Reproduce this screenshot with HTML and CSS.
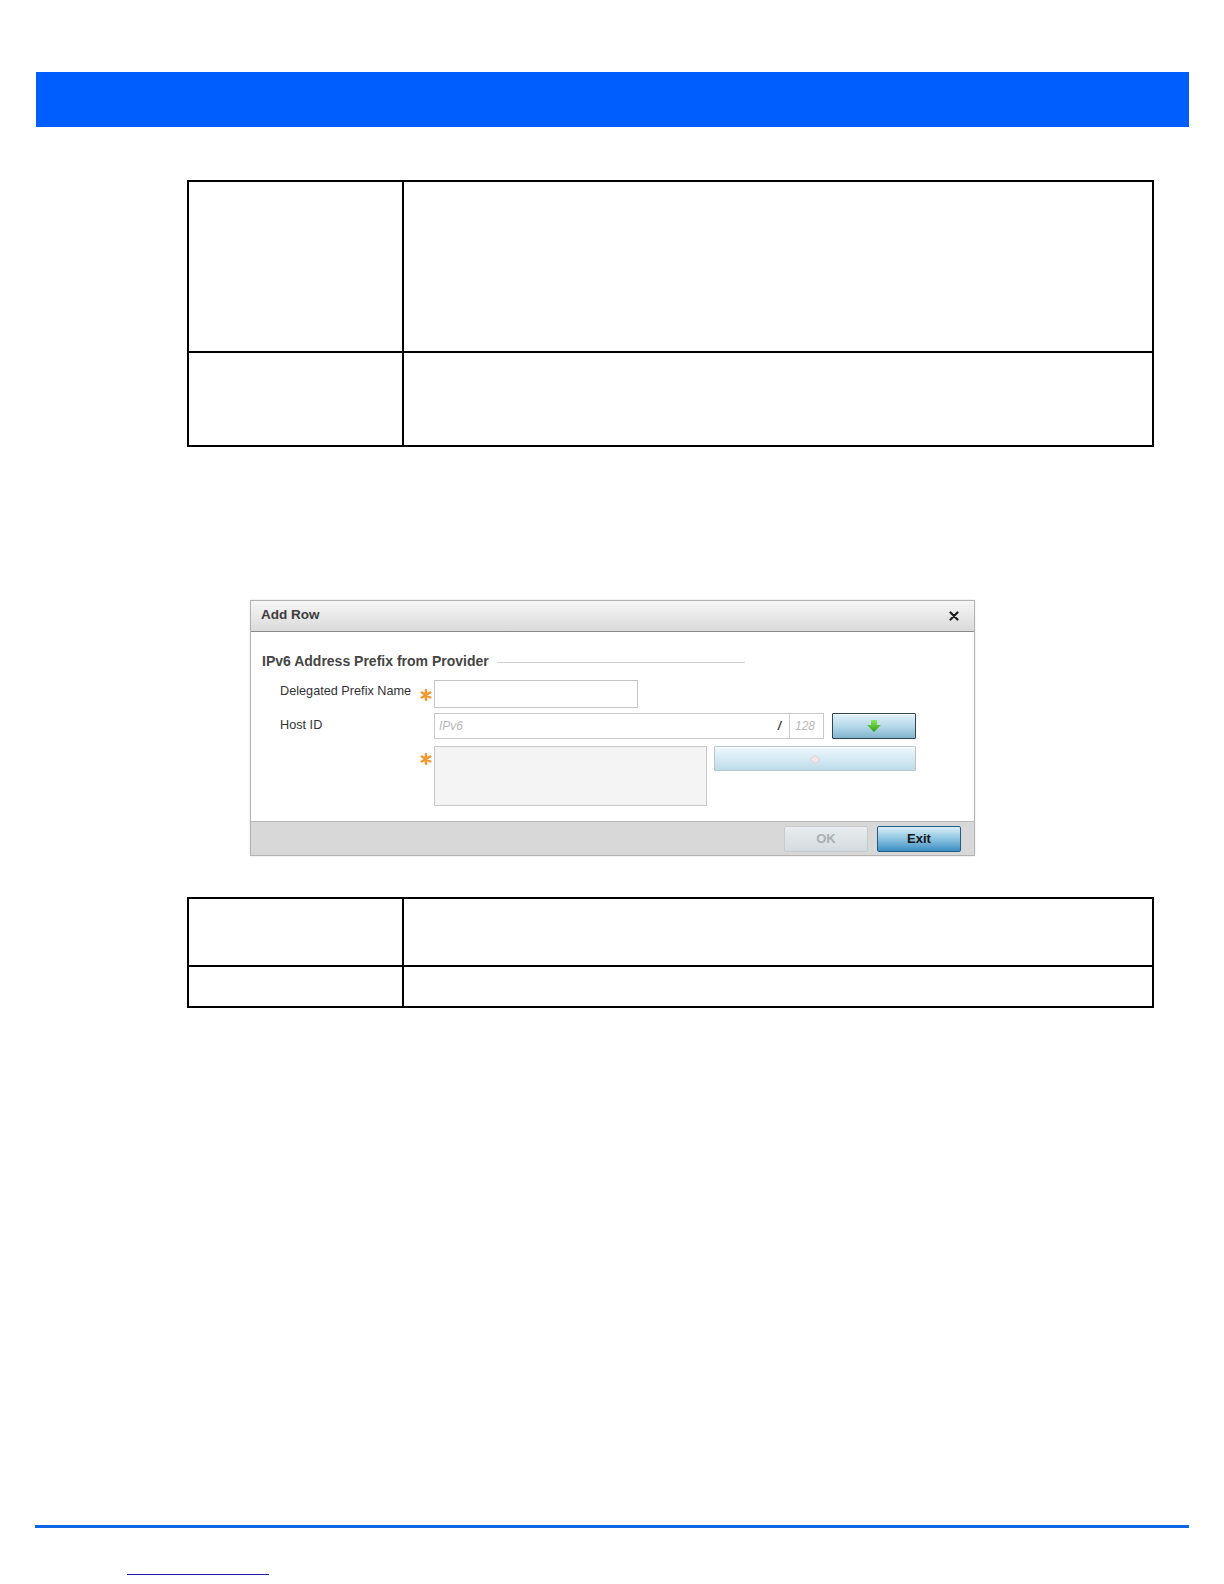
FILE: index.html
```html
<!DOCTYPE html>
<html lang="en">
<head>
    <meta charset="UTF-8">
    <meta name="viewport" content="width=device-width, initial-scale=1.0">
    <title>Add Row</title>
    <link rel="stylesheet" href="styles.css">
</head>
<body>
    <div class="page-bar"></div>

    <div class="spec spec-top">
        <div class="cell cell-tall"></div>
        <div class="cell cell-tall"></div>
        <div class="cell cell-mid"></div>
        <div class="cell cell-mid"></div>
    </div>

    <div class="dialog">
        <div class="dialog-title">
            <span>Add Row</span>
            <svg class="close" width="10" height="10" viewBox="0 0 10 10">
                <path d="M1.5 1.5L8.5 8.5M8.5 1.5L1.5 8.5" stroke="#1e1e1e" stroke-width="2.2" stroke-linecap="round"/>
            </svg>
        </div>

        <div class="dialog-body">
            <div class="group-head">
                <span>IPv6 Address Prefix from Provider</span>
                <span class="group-line"></span>
            </div>

            <div class="form-row row-name">
                <label class="field-label">Delegated Prefix Name</label>
                <span class="req">
                    <svg width="12" height="12" viewBox="0 0 12 12">
                        <path d="M6 1v10M1.7 3.5l8.6 5M1.7 8.5l8.6-5" stroke="#f5952a" stroke-width="2.4" stroke-linecap="round"/>
                    </svg>
                </span>
                <input class="text-input" type="text">
            </div>

            <div class="form-row row-host">
                <label class="field-label">Host ID</label>
                <span class="req"></span>
                <div class="ip-input">
                    <span class="ip-addr">IPv6</span>
                    <span class="ip-slash">/</span>
                    <span class="ip-len">128</span>
                </div>
                <button class="move-btn">
                    <svg width="14" height="12" viewBox="0 0 14 12">
                        <defs>
                            <linearGradient id="grn" x1="0" y1="0" x2="0" y2="1">
                                <stop offset="0" stop-color="#8ee85a"/>
                                <stop offset="1" stop-color="#2a9c16"/>
                            </linearGradient>
                        </defs>
                        <path d="M4 0h6v5h4l-7 7-7-7h4z" fill="url(#grn)"/>
                    </svg>
                </button>
            </div>

            <div class="form-row row-list">
                <span class="field-label"></span>
                <span class="req">
                    <svg width="12" height="12" viewBox="0 0 12 12">
                        <path d="M6 1v10M1.7 3.5l8.6 5M1.7 8.5l8.6-5" stroke="#f5952a" stroke-width="2.4" stroke-linecap="round"/>
                    </svg>
                </span>
                <div class="list-box"></div>
                <button class="move-btn up-btn" disabled>
                    <svg width="14" height="10" viewBox="0 0 14 10">
                        <path d="M7 1l5 4.5-5 4-5-4z" fill="#f3e4e8" stroke="#e6cfd6" stroke-width="1"/>
                    </svg>
                </button>
            </div>
        </div>

        <div class="dialog-foot">
            <button class="btn btn-off" disabled>OK</button>
            <button class="btn btn-exit">Exit</button>
        </div>
    </div>

    <div class="spec spec-bottom">
        <div class="cell cell-short"></div>
        <div class="cell cell-short"></div>
        <div class="cell cell-low"></div>
        <div class="cell cell-low"></div>
    </div>

    <div class="page-rule"></div>
    <a class="page-link" href="#"></a>
</body>
</html>
```

FILE: styles.css
```css
body {
    margin: 0;
    padding: 0;
    background: #ffffff;
    font-family: "Liberation Sans", Arial, sans-serif;
    color: #333;
}
.page-bar {
    margin: 72px 0 0 36px;
    width: 1153px;
    height: 55px;
    background-color: #005eff;
}

/* document tables */
.spec {
    display: grid;
    grid-template-columns: 215px 750px;
    width: 967px;
    margin-left: 187px;
    border-top: 2px solid #000;
    border-left: 2px solid #000;
    box-sizing: border-box;
}
.spec-top {
    margin-top: 53px;
}
.spec-bottom {
    margin-top: 41px;
}
.cell {
    border-right: 2px solid #000;
    border-bottom: 2px solid #000;
}
.cell-tall { height: 169px; }
.cell-mid { height: 92px; }
.cell-short { height: 66px; }
.cell-low { height: 39px; }

/* dialog */
.dialog {
    margin: 153px 0 0 250px;
    width: 725px;
    border: 1px solid #b3b3b3;
    box-sizing: border-box;
    box-shadow: 0 0 2px rgba(0, 0, 0, 0.12);
    background: #fff;
}
.dialog-title {
    height: 31px;
    box-sizing: border-box;
    display: flex;
    align-items: center;
    justify-content: space-between;
    padding: 0 15px 3px 10px;
    background: linear-gradient(#f6f6f6, #dadada);
    border-bottom: 1px solid #8a8a8a;
    font-size: 13.5px;
    font-weight: bold;
    color: #3c3c3c;
}
.close {
    margin-top: 3px;
}
.dialog-body {
    height: 189px;
    box-sizing: border-box;
    padding: 21px 0 0 11px;
}
.group-head {
    display: flex;
    align-items: center;
    height: 16px;
    font-size: 14px;
    font-weight: bold;
    color: #454545;
}
.group-line {
    width: 248px;
    height: 1px;
    margin: 2px 0 0 8px;
    background: #cfcfcf;
}
.form-row {
    display: flex;
    align-items: flex-start;
    padding-left: 18px;
}
.row-name {
    margin-top: 11px;
}
.row-host {
    margin-top: 5px;
}
.row-list {
    margin-top: 7px;
}
.field-label {
    width: 140px;
    flex-shrink: 0;
    font-size: 12.7px;
    color: #333;
    line-height: 16px;
}
.row-name .field-label {
    margin-top: 3px;
}
.row-host .field-label {
    margin-top: 4px;
}
.req {
    width: 14px;
    flex-shrink: 0;
    display: flex;
}
.row-name .req {
    margin-top: 9px;
}
.row-list .req {
    margin-top: 7px;
}
.text-input {
    width: 204px;
    height: 28px;
    box-sizing: border-box;
    border: 1px solid #c4c4c4;
    margin: 0;
    padding: 0 4px;
    background: #fff;
}
.ip-input {
    display: flex;
    width: 390px;
    height: 26px;
    box-sizing: border-box;
    border: 1px solid #c8c8c8;
    font-size: 12px;
    font-style: italic;
    line-height: 24px;
}
.ip-addr {
    flex: 1;
    padding-left: 4px;
    color: #b8b8b8;
}
.ip-slash {
    padding-right: 8px;
    color: #444;
    font-weight: bold;
}
.ip-len {
    width: 34px;
    border-left: 1px solid #d0d0d0;
    padding-left: 5px;
    box-sizing: border-box;
    color: #b8b8b8;
}
.move-btn {
    width: 84px;
    height: 26px;
    margin: 0 0 0 8px;
    padding: 0;
    display: flex;
    align-items: center;
    justify-content: center;
    border: 1px solid #2e4653;
    border-radius: 1px;
    background: linear-gradient(#e2f1f9, #b3d6e8 55%, #80b4cf);
    box-shadow: inset 0 1px 0 rgba(255, 255, 255, 0.7);
}
.list-box {
    width: 273px;
    height: 60px;
    box-sizing: border-box;
    border: 1px solid #c8c8c8;
    background: #f4f4f4;
}
.up-btn {
    width: 202px;
    height: 25px;
    margin-left: 7px;
    border-color: #b9c6cd;
    background: linear-gradient(#eef7fb, #d4e9f3 55%, #bcdbe9);
}
.dialog-foot {
    height: 34px;
    box-sizing: border-box;
    display: flex;
    align-items: center;
    justify-content: flex-end;
    gap: 9px;
    padding: 0 13px 0 0;
    border-top: 1px solid #b9b9b9;
    background: #d8d8d8;
}
.btn {
    width: 84px;
    height: 26px;
    padding: 0;
    border-radius: 2px;
    font-family: "Liberation Sans", Arial, sans-serif;
    font-size: 13px;
    font-weight: bold;
}
.btn-off {
    border: 1px solid #c5cbcf;
    background: linear-gradient(#e8ecee, #d5dbdf);
    color: #a9b0b4;
}
.btn-exit {
    border: 1px solid #1f5d86;
    background: linear-gradient(#d9eff9, #8cc3e0 50%, #3c8fc2);
    color: #161616;
    cursor: pointer;
}
.btn-exit:hover {
    background: linear-gradient(#e6f5fc, #9dcde6 50%, #4c9bcc);
}

/* page footer */
.page-rule {
    margin: 517px 0 0 35px;
    width: 1154px;
    height: 3px;
    background: #0a66e2;
}
.page-link {
    display: block;
    margin: 46px 0 0 127px;
    width: 142px;
    height: 1px;
    background: #1c1ca6;
}
```
